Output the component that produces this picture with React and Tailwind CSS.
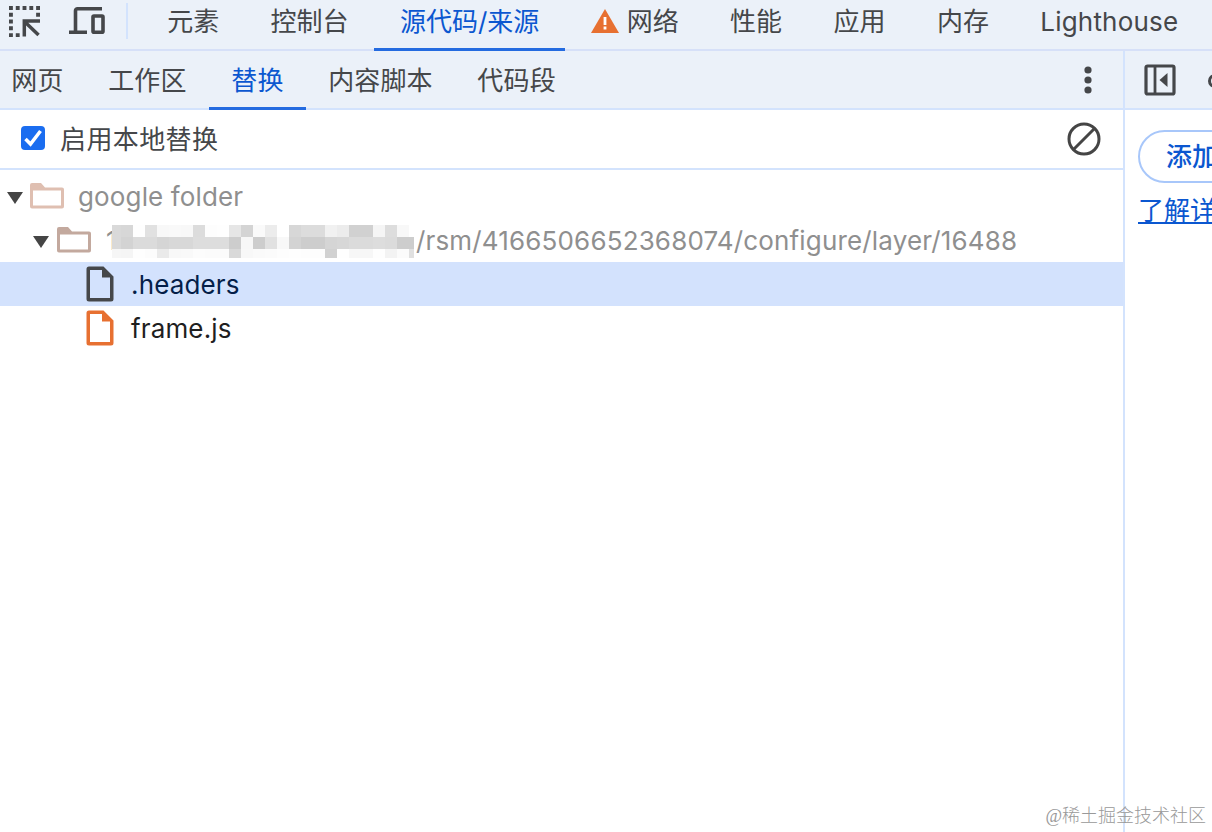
import React, { useState } from 'react';
import clsx from 'clsx';

const panels = [
  { id: 'elements', label: '元素' },
  { id: 'console', label: '控制台' },
  { id: 'sources', label: '源代码/来源' },
  { id: 'network', label: '网络', warning: true },
  { id: 'performance', label: '性能' },
  { id: 'application', label: '应用' },
  { id: 'memory', label: '内存' },
  { id: 'lighthouse', label: 'Lighthouse' },
];

const navTabs = [
  { id: 'page', label: '网页' },
  { id: 'workspace', label: '工作区' },
  { id: 'overrides', label: '替换' },
  { id: 'scripts', label: '内容脚本' },
  { id: 'snippets', label: '代码段' },
];

// Grey levels of the censored host name, one list per row of blocks
const mosaicColumns = [9, ...Array(24).fill(12), 5];
const mosaicRows = [
  {
    height: 12,
    levels: [217, 215, 254, 225, 248, 249, 248, 220, 253, 254, 230, 212, 250, 236, 255, 215, 220, 220, 241, 236, 209, 209, 245, 221, 248, 255],
  },
  {
    height: 12,
    levels: [217, 211, 219, 219, 213, 216, 216, 221, 221, 221, 205, 247, 205, 225, 248, 211, 205, 205, 213, 215, 219, 219, 221, 219, 205, 205],
  },
  {
    height: 9,
    levels: [246, 245, 254, 252, 234, 248, 249, 252, 251, 251, 217, 248, 250, 251, 253, 254, 253, 253, 209, 254, 247, 247, 254, 243, 251, 224],
  },
];

function InspectIcon() {
  return (
    <svg className="w-[31px] h-[31px] shrink-0" viewBox="0 0 32 32" fill="#45474a">
      <path d="M0 0h4v4H0zM7 0h4v4H7zM14 0h4v4h-4zM21 0h4v4h-4zM28 0h4v4h-4zM0 7h4v4H0zM0 14h4v4H0zM0 21h4v4H0zM0 28h4v4H0zM7 28h4v4H7zM28 7h4v4h-4z" />
      <path d="M15.800 31.500V15.500H32M16.500 16.500l14 13.500" fill="none" stroke="#45474a" strokeWidth="3.600" />
    </svg>
  );
}

function DeviceIcon() {
  return (
    <svg className="w-9 h-7 shrink-0" viewBox="0 0 36 28" fill="none" stroke="#45474a" strokeWidth="3.6">
      <path d="M33 1.8H8.5a2 2 0 0 0-2 2V25M0 25.2h18" />
      <rect x="24" y="9" width="10" height="16.2" rx="1" />
    </svg>
  );
}

function FolderIcon({ color }) {
  return (
    <svg className="w-9 h-7 shrink-0" viewBox="0 0 36 28">
      <path d="M1 24.500V3a2 2 0 0 1 2-2h9l4 4.500h17a2 2 0 0 1 2 2v17a2 2 0 0 1-2 2H3a2 2 0 0 1-2-2z" fill={color} />
      <path d="M4 8.500h28v15H4z" fill="#fff" />
    </svg>
  );
}

function FileIcon({ color, fill }) {
  return (
    <svg className="w-7 h-9 shrink-0" viewBox="0 0 28 36">
      <path d="M3 .5h14.500L27.500 10.500V33a2.500 2.500 0 0 1-2.500 2.500H3A2.500 2.500 0 0 1 .5 33V3A2.500 2.500 0 0 1 3 .5z" fill={color} />
      <path d="M4 4h12v7.500h8V32H4z" fill={fill} />
    </svg>
  );
}

function Arrow() {
  return (
    <svg className="w-4 h-3 mt-[3px] shrink-0" viewBox="0 0 16 12">
      <path d="M0 0h16L8 12z" fill="#454545" />
    </svg>
  );
}

function Mosaic() {
  return (
    <div className="absolute left-[5px] top-[7px]">
      {mosaicRows.map((row, y) => (
        <div key={y} className="flex" style={{ height: row.height }}>
          {row.levels.map((level, x) => (
            <div key={x} style={{ width: mosaicColumns[x], background: `rgb(${level},${level},${level})` }} />
          ))}
        </div>
      ))}
    </div>
  );
}

export default function App() {
  const [panel, setPanel] = useState('sources');
  const [navTab, setNavTab] = useState('overrides');
  const [enabled, setEnabled] = useState(true);

  return (
    <div
      lang="zh-CN"
      className="relative flex flex-col w-[1212px] h-[832px] overflow-hidden bg-white text-[26px] leading-[40px] text-[#45474a] whitespace-nowrap font-['Inter','Noto_Sans_CJK_SC',sans-serif]"
    >
      {/* Main toolbar */}
      <div className="flex shrink-0 h-[51px] bg-[#ebf1f9] border-b-2 border-[#d6e0f8]">
        <div className="flex shrink-0 w-[141.500px] h-[42px] items-center pl-[9px]">
          <InspectIcon />
          <div className="ml-[29px]">
            <DeviceIcon />
          </div>
          <div className="ml-[21px] w-[2px] h-9 bg-[#d3e3fd]" />
        </div>
        {panels.map((item) => (
          <button
            key={item.id}
            onClick={() => setPanel(item.id)}
            className={clsx(
              'flex shrink-0 h-[51px] px-[25.700px] pt-[2px] border-b-[3px]',
              panel === item.id ? 'text-[#0b57d0] border-[#246be0]' : 'border-transparent'
            )}
          >
            {item.warning && (
              <svg className="w-7 h-6 mt-[7px] mr-2" viewBox="0 0 28 24">
                <path d="M14 0l14 24H0z" fill="#e77031" />
                <path d="M12.600 8h2.800v8h-2.800zM12.600 17.500h2.800v3h-2.800z" fill="#fff" />
              </svg>
            )}
            <span className={clsx(item.id === 'lighthouse' && 'tracking-[0.200px]')}>{item.label}</span>
          </button>
        ))}
      </div>

      <div className="flex grow min-h-0">
        {/* Navigator */}
        <div className="flex flex-col shrink-0 w-[1125px] border-r-2 border-[#d3e3fd]">
          <div className="flex shrink-0 h-[59px] bg-[#ebf1f9] border-b-2 border-[#d3e3fd]">
            <div className="flex -ml-[11px]">
              {navTabs.map((item) => (
                <button
                  key={item.id}
                  onClick={() => setNavTab(item.id)}
                  className={clsx(
                    'h-[59px] px-[22.300px] pt-[10px] pb-[6px] border-b-[3px] tracking-[0.150px]',
                    navTab === item.id ? 'text-[#0b57d0] border-[#246be0]' : 'border-transparent'
                  )}
                >
                  {item.label}
                </button>
              ))}
            </div>
            <svg className="w-2 h-7 ml-auto mr-[31px] mt-[15px]" viewBox="0 0 8 28" fill="#45474a">
              <circle cx="4" cy="4" r="3.600" />
              <circle cx="4" cy="14" r="3.600" />
              <circle cx="4" cy="24" r="3.600" />
            </svg>
          </div>

          <div className="flex shrink-0 items-center h-[60px] pl-[21px] pr-[22px] border-b-2 border-[#d3e3fd]">
            <button
              onClick={() => setEnabled(!enabled)}
              className="flex items-center justify-center w-6 h-6 -mt-[2px] rounded-[4px] bg-[#1a6df0]"
            >
              {enabled && (
                <svg className="w-6 h-6" viewBox="0 0 24 24" fill="none" stroke="#fff" strokeWidth="3.500">
                  <path d="M4.500 13l5 5L19.500 5" />
                </svg>
              )}
            </button>
            <span className="ml-[15px] pt-[2px] tracking-[0.400px]">启用本地替换</span>
            <svg className="w-[34px] h-[34px] ml-auto" viewBox="0 0 34 34" fill="none" stroke="#454545" strokeWidth="3">
              <circle cx="17" cy="17" r="15" />
              <path d="M6.500 27.500l21-21" />
            </svg>
          </div>

          {/* Overrides tree */}
          <div className="flex flex-col pt-1 tracking-[0.140px]">
            <div className="flex items-center h-11 pl-[7px] text-[#8f8f8f]">
              <Arrow />
              <div className="ml-[6px]">
                <FolderIcon color="#dfbfb1" />
              </div>
              <span className="ml-[13px] pt-[2px]">google folder</span>
            </div>
            <div className="flex items-center h-11 pl-[33px] text-[#8f8f8f]">
              <Arrow />
              <div className="ml-[7px]">
                <FolderIcon color="#c3a99e" />
              </div>
              <div className="relative flex items-center w-[309px] h-11 ml-[15px]">
                <span className="-ml-px pt-[2px]">1</span>
                <Mosaic />
              </div>
              <span className="pt-[2px] tracking-[0.160px]">/rsm/4166506652368074/configure/layer/16488</span>
            </div>
            <div className="flex items-center h-11 pl-[86px] bg-[#d3e2fd] text-[#041e49]">
              <FileIcon color="#45474a" fill="#d3e2fd" />
              <span className="ml-[17px] pt-[2px]">.headers</span>
            </div>
            <div className="flex items-center h-11 pl-[86px] text-[#1f1f1f]">
              <FileIcon color="#e77031" fill="#fff" />
              <span className="ml-[17px] pt-[2px]">frame.js</span>
            </div>
          </div>
        </div>

        {/* Editor side */}
        <div className="flex flex-col grow min-w-0 overflow-hidden">
          <div className="flex shrink-0 items-center h-[59px] pl-[19px] bg-[#ebf1f9] border-b-2 border-[#d3e3fd]">
            <svg className="w-8 h-8 shrink-0" viewBox="0 0 32 32" fill="none" stroke="#45474a" strokeWidth="3.200">
              <rect x="2" y="2" width="28" height="28" rx="1.500" />
              <path d="M11 2v28" strokeWidth="2.800" />
              <path d="M23.500 9v14l-8-7z" fill="#45474a" stroke="none" />
            </svg>
            <svg className="w-[14px] h-[14px] ml-8 mt-[3px] shrink-0" viewBox="0 0 14 14" fill="none" stroke="#45474a" strokeWidth="3">
              <circle cx="7" cy="7" r="5.500" />
            </svg>
          </div>
          <div className="flex flex-col items-start pl-[13px] pt-5 text-[#0b57d0]">
            <button className="flex items-center h-[53px] px-[26px] pt-px rounded-full border-2 border-[#a8c7fa] font-medium">
              添加替换
            </button>
            <a className="mt-2 underline underline-offset-[2px] decoration-2">了解详情</a>
          </div>
        </div>
      </div>

      <div className="absolute right-[6px] bottom-[4px] text-[18px] leading-6 text-[#999] font-['Liberation_Serif','Noto_Sans_CJK_SC',serif] font-light">
        @稀土掘金技术社区
      </div>
    </div>
  );
}
